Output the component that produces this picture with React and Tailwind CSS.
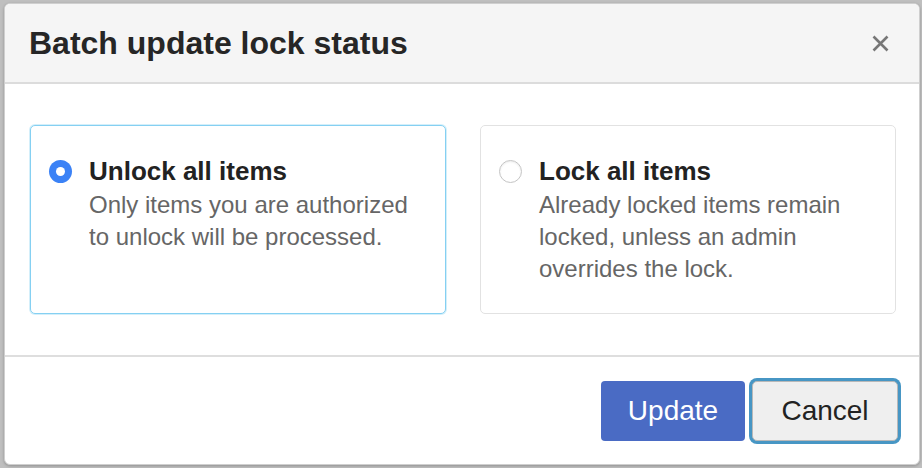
// Batch update lock status modal dialog.
import { useState } from "react";

const OPTIONS = [
  {
    id: "unlock",
    title: "Unlock all items",
    lines: ["Only items you are authorized", "to unlock will be processed."]
  },
  {
    id: "lock",
    title: "Lock all items",
    lines: ["Already locked items remain", "locked, unless an admin", "overrides the lock."]
  }
];

function Radio({ checked }) {
  if (checked) {
    return (
      <span className="flex h-[23px] w-[23px] shrink-0 items-center justify-center rounded-full bg-[#3b82f6]">
        <span className="h-[9px] w-[9px] rounded-full bg-white" />
      </span>
    );
  }
  return (
    <span className="h-[23px] w-[23px] shrink-0 rounded-full border border-[#c4c4c4] bg-white shadow-[inset_0_1px_2px_rgba(0,0,0,0.08)]" />
  );
}

function OptionCard({ option, checked, onSelect }) {
  return (
    <button
      type="button"
      onClick={onSelect}
      className={
        "flex items-start rounded-[5px] border bg-white pb-[28px] pl-[18px] pr-4 pt-[29px] text-left " +
        (checked ? "border-[#85d0f2] shadow-[0_0_0_1px_rgba(133,208,242,0.35)]" : "border-[#e2e2e2]")
      }
    >
      <span className="flex h-[32px] items-center">
        <Radio checked={checked} />
      </span>
      <span className="ml-[17px] flex flex-col">
        <span className="text-[26px] font-bold leading-[32px] text-[#222]">{option.title}</span>
        <span className="mt-[2px] text-[24px] leading-[32px] text-[#666]">
          {option.lines.map((l) => (
            <span key={l} className="block">
              {l}
            </span>
          ))}
        </span>
      </span>
    </button>
  );
}

export default function App() {
  const [mode, setMode] = useState("unlock");

  return (
    <div className="h-[468px] w-[922px] overflow-hidden bg-[#bfbfbf] pb-[3px] pl-[4px] pr-[2px] pt-[3px] font-['Liberation_Sans',Arial,sans-serif]">
      <div className="flex h-full flex-col overflow-hidden rounded-[6px] border border-[#cfcfcf] bg-white shadow-[0_1px_3px_rgba(0,0,0,0.25)]">
        <div className="flex h-[80px] shrink-0 items-center justify-between border-b-2 border-[#dcdcdc] bg-[#f5f5f5] pl-[24px] pr-[30px]">
          <h2 className="text-[32px] font-bold leading-none text-[#262626]">Batch update lock status</h2>
          <svg width="17" height="17" viewBox="0 0 17 17" className="text-[#777]">
            <path d="M1.5 1.5 L15.5 15.5 M15.5 1.5 L1.5 15.5" stroke="currentColor" strokeWidth="2.6" strokeLinecap="butt" />
          </svg>
        </div>

        <div className="grid shrink-0 grid-cols-2 gap-[34px] border-b-2 border-[#dedede] pb-[41px] pl-[25px] pr-[23px] pt-[41px]">
          {OPTIONS.map((o) => (
            <OptionCard key={o.id} option={o} checked={mode === o.id} onSelect={() => setMode(o.id)} />
          ))}
        </div>

        <div className="flex flex-1 items-start justify-end gap-[7px] pr-[21px] pt-[24px]">
          <button
            type="button"
            className="h-[60px] w-[144px] rounded-[4px] bg-[#4a6bc4] text-[28px] leading-none text-white"
          >
            Update
          </button>
          <button
            type="button"
            className="h-[60px] w-[146px] rounded-[5px] border border-[#b8b8b8] bg-[#efefef] text-[28px] leading-none text-[#222] ring-[3px] ring-[#4796c4]"
          >
            Cancel
          </button>
        </div>
      </div>
    </div>
  );
}
